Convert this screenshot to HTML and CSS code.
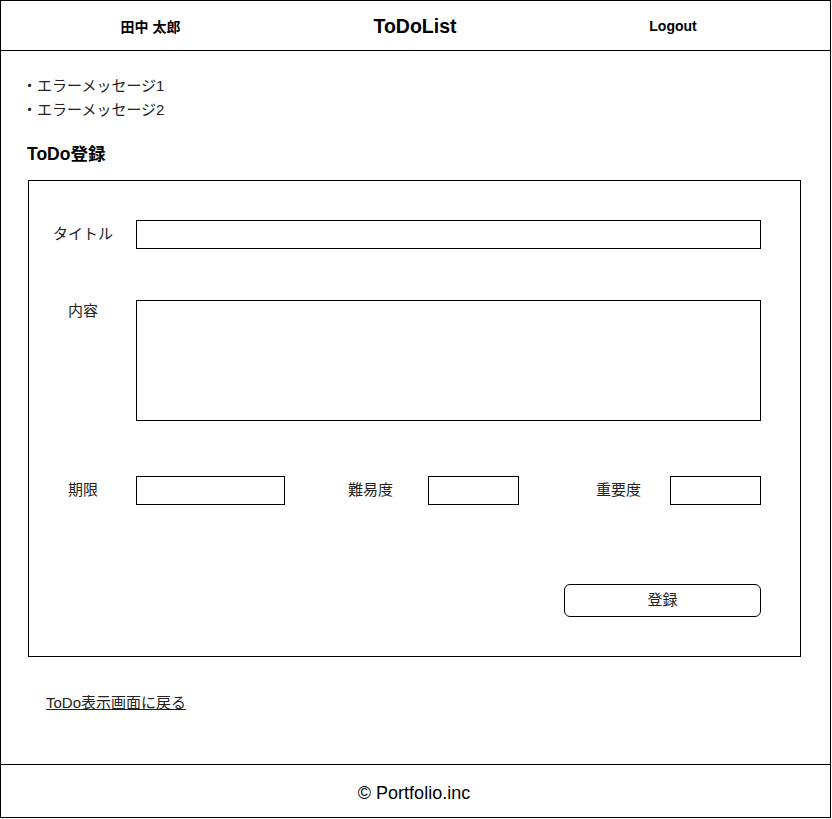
FILE: index.html
```html
<!DOCTYPE html>
<html lang="ja">
<head>
<meta charset="utf-8">
<title>ToDo登録</title>
<link rel="stylesheet" href="styles.css">
</head>
<body>
<div class="page">
  <header class="header">
    <div class="user">田中 太郎</div>
    <div class="brand">ToDoList</div>
    <div class="logout">Logout</div>
  </header>
  <main class="main">
    <ul class="errors">
      <li>・エラーメッセージ1</li>
      <li>・エラーメッセージ2</li>
    </ul>
    <h1 class="title">ToDo登録</h1>
    <form class="form-box">
      <div class="row row-title">
        <label class="label">タイトル</label>
        <input class="field field-wide" type="text">
      </div>
      <div class="row row-content">
        <label class="label label-top">内容</label>
        <textarea class="field field-area"></textarea>
      </div>
      <div class="row row-meta">
        <label class="label">期限</label>
        <input class="field field-date" type="text">
        <label class="label-inline label-diff">難易度</label>
        <input class="field field-small field-diff" type="text">
        <label class="label-inline label-imp">重要度</label>
        <input class="field field-small field-imp" type="text">
      </div>
      <div class="row row-submit">
        <button class="submit" type="button">登録</button>
      </div>
    </form>
    <a class="back" href="#">ToDo表示画面に戻る</a>
  </main>
  <footer class="footer">© Portfolio.inc</footer>
</div>
</body>
</html>
```
FILE: styles.css
```css
* { box-sizing: border-box; }
html, body { margin: 0; padding: 0; background: #fff; }
body {
  font-family: "Liberation Sans", "Noto Sans CJK JP", sans-serif;
  color: #111;
}
.page {
  width: 831px;
  height: 818px;
  border: 1px solid #000;
  display: flex;
  flex-direction: column;
}
.header {
  height: 50px;
  border-bottom: 1px solid #000;
  display: grid;
  grid-template-columns: 299px 230px 286px;
  align-items: center;
  padding-top: 1px;
  font-weight: bold;
  color: #000;
}
.user, .logout { font-size: 14px; text-align: center; }
.brand { font-size: 19.5px; text-align: center; }
.main {
  flex: 1;
  padding-top: 23px;
  display: flex;
  flex-direction: column;
}
.errors {
  list-style: none;
  margin: 0 0 0 21px;
  padding: 0;
  font-size: 15px;
  line-height: 24px;
  color: #222;
}
.title {
  margin: 20px 0 0 26px;
  font-size: 17.5px;
  line-height: 24px;
  font-weight: bold;
  color: #000;
}
.form-box {
  margin: 14px 0 0 27px;
  width: 773px;
  height: 477px;
  border: 1px solid #000;
  padding: 39px 39px 39px 0;
  display: flex;
  flex-direction: column;
}
.row { display: flex; align-items: center; }
.row-content { margin-top: 51px; align-items: flex-start; }
.row-meta { margin-top: 55px; }
.row-submit { margin-top: 79px; justify-content: flex-end; }
.label {
  width: 107px;
  text-align: center;
  font-size: 15px;
  line-height: 22px;
  color: #222;
  padding-left: 1px;
  padding-bottom: 1px;
}
.label-top { padding-bottom: 0; }
.label-inline {
  width: 45px;
  font-size: 15px;
  line-height: 22px;
  color: #222;
  white-space: nowrap;
  padding-bottom: 1px;
}
.field {
  display: block;
  border: 1px solid #000;
  border-radius: 0;
  background: #fff;
  margin: 0;
  padding: 0;
  height: 29px;
  font: inherit;
  outline: none;
}
.field-wide { width: 625px; }
.field-area { width: 625px; height: 121px; resize: none; }
.field-date { width: 149px; }
.field-small { width: 91px; }
.label-diff { margin-left: 63px; }
.field-diff { margin-left: 35px; }
.label-imp { margin-left: 77px; }
.field-imp { margin-left: 29px; }
.submit {
  width: 197px;
  height: 33px;
  border: 1px solid #000;
  border-radius: 6px;
  background: #fff;
  font-family: inherit;
  font-size: 15px;
  line-height: 20px;
  color: #222;
  padding: 0 0 2px 0;
}
.back {
  margin: 34px 0 0 45px;
  align-self: flex-start;
  font-size: 15px;
  line-height: 24px;
  color: #222;
  text-decoration: underline;
}
.footer {
  height: 53px;
  border-top: 1px solid #000;
  padding-top: 4px;
  text-align: center;
  font-size: 18px;
  line-height: 48px;
  color: #000;
  padding-right: 3px;
}
```
